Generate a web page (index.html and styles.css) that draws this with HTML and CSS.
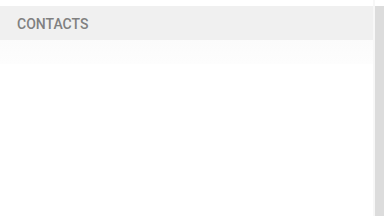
FILE: index.html
```html
<!DOCTYPE html>
<html lang="en">
<head>
    <meta charset="UTF-8">
    <title>Contacts</title>
    <link rel="stylesheet" href="styles.css">
</head>
<body>
    <div class="page">
        <div class="content">
            <div class="header">
                <span class="title">CONTACTS</span>
            </div>
            <div class="fade"></div>
        </div>
        <div class="scrollbar"></div>
    </div>
</body>
</html>
```

FILE: styles.css
```css
html, body {
    margin: 0;
    height: 100%;
    background-color: #ffffff;
    font-family: Roboto, 'Liberation Sans', Arial, sans-serif;
}
.page {
    display: flex;
    height: 100%;
}
.content {
    flex: 1;
    padding-top: 6px;
    border-right: 2px solid #f7f7f7;
}
.header {
    height: 34px;
    box-sizing: border-box;
    padding: 2px 0 0 17px;
    background-color: #f0f0f0;
    display: flex;
    align-items: center;
}
.title {
    font-size: 14px;
    font-weight: 500;
    color: #808080;
}
.fade {
    height: 24px;
    background: linear-gradient(#fbfbfb, #fdfdfd);
}
.scrollbar {
    width: 9px;
    margin-top: 6px;
    background-color: #dcdcdc;
}
```
